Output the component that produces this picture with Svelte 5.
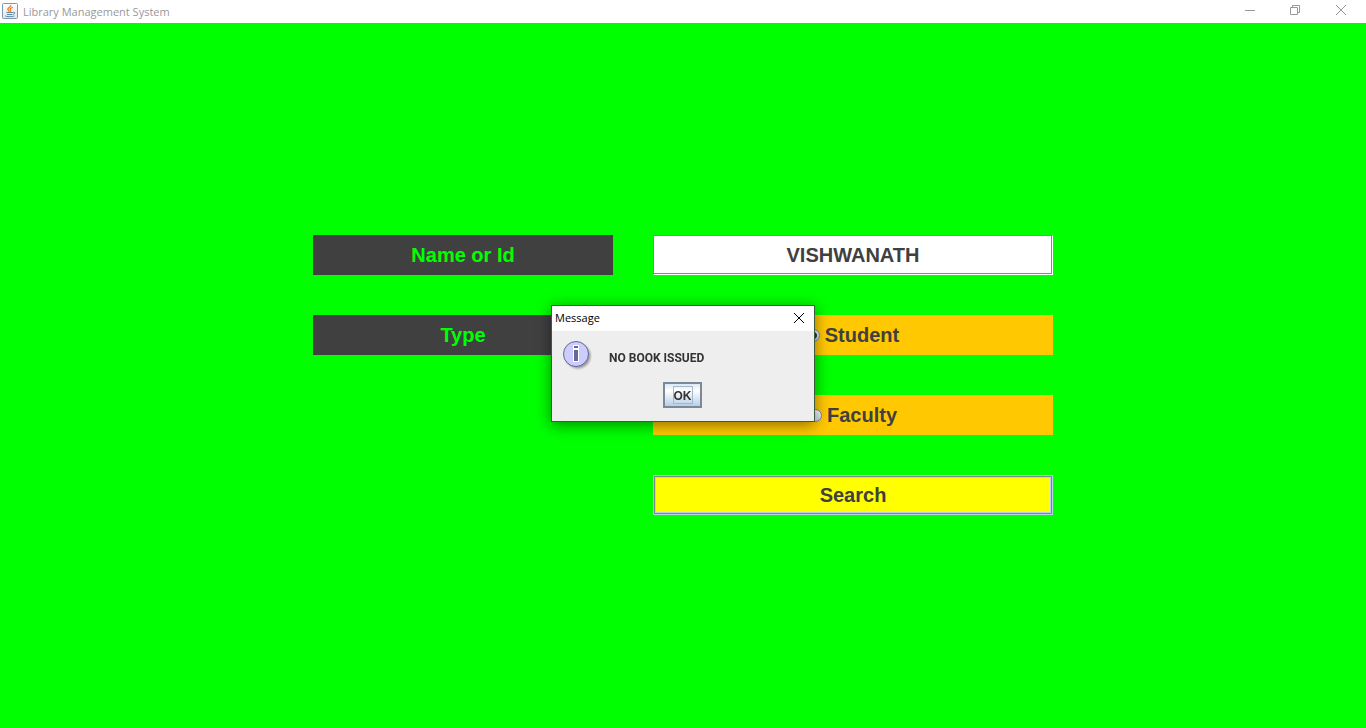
<script>
  let name = $state('VISHWANATH');
  let type = $state('Student');
  let open = $state(true);
</script>

<div class="window">
  <header class="titlebar">
    <svg class="java" width="16" height="16" viewBox="0 0 16 16" aria-hidden="true">
      <defs>
        <linearGradient id="tile" x1="0" y1="0" x2="0" y2="1">
          <stop offset="0" stop-color="#ffffff" />
          <stop offset="1" stop-color="#dfe6ec" />
        </linearGradient>
      </defs>
      <rect x="0.5" y="0.5" width="15" height="15" rx="1" fill="url(#tile)" stroke="#7c98ae" />
      <path d="M8.8 2C9.6 4 5.2 4.6 5.8 6.6C6.1 7.4 7 7.9 7.3 8.6M10.8 4.3C8.4 5 7.5 6 8.5 7.1C9 7.7 8.6 8.2 8.2 8.6" fill="none" stroke="#f07a2c" stroke-width="1.3" />
      <path d="M4.4 9.5H10.8M5 11.5H10.4M11.2 9.3C13.6 8.8 13 11 11 11.3M3.2 12.8C4 13.9 10.5 13.9 12.4 12.9" fill="none" stroke="#5d86a4" stroke-width="1" />
    </svg>
    <span class="title">Library Management System</span>
    <div class="controls">
      <button type="button" aria-label="Minimize">
        <svg width="12" height="12" viewBox="0 0 12 12"><path d="M2 6.5H12" /></svg>
      </button>
      <button type="button" aria-label="Restore">
        <svg width="12" height="12" viewBox="0 0 12 12"><path d="M1.5 3.5H8.5V10.5H1.5ZM3.5 3.5V1.5H10.5V8.5H8.5" /></svg>
      </button>
      <button type="button" aria-label="Close">
        <svg width="12" height="12" viewBox="0 0 12 12"><path d="M1 1L11 11M11 1L1 11" /></svg>
      </button>
    </div>
  </header>

  <main>
    <form onsubmit={(e) => { e.preventDefault(); open = true; }}>
      <label class="caption" for="name">Name or Id</label>
      <input class="field" id="name" type="text" bind:value={name} />
      <span class="caption" id="type-caption">Type</span>
      <div class="choices" role="radiogroup" aria-labelledby="type-caption">
        {#each ['Student', 'Faculty'] as option}
          <label class="choice">
            <input type="radio" name="type" value={option} bind:group={type} />
            {option}
          </label>
        {/each}
      </div>
      <button class="search" type="submit">Search</button>
    </form>
  </main>

  {#if open}
    <div class="overlay">
      <div class="dialog" role="dialog" aria-labelledby="dialog-title">
        <div class="dialog-bar">
          <span id="dialog-title">Message</span>
          <button type="button" class="dialog-close" aria-label="Close message" onclick={() => (open = false)}>
            <svg width="12" height="12" viewBox="0 0 12 12"><path d="M1 1L11 11M11 1L1 11" /></svg>
          </button>
        </div>
        <div class="dialog-body">
          <div class="message">
            <svg width="32" height="32" viewBox="0 0 32 32" aria-hidden="true">
              <defs>
                <filter id="soft" x="-20%" y="-20%" width="150%" height="150%">
                  <feGaussianBlur stdDeviation="1.3" />
                </filter>
              </defs>
              <circle cx="16" cy="16" r="12.5" fill="#000" opacity="0.35" filter="url(#soft)" />
              <circle cx="14" cy="14" r="12.5" fill="#ccccff" stroke="#666699" />
              <path d="M11 5H17V22H11Z" fill="#fff" />
              <path d="M12 6H16V8H12ZM12 10H16V21H12Z" fill="#666699" />
            </svg>
            <p>NO BOOK ISSUED</p>
          </div>
          <button type="button" class="ok" onclick={() => (open = false)}><span>OK</span></button>
        </div>
      </div>
    </div>
  {/if}
</div>

<style>
  :global(body) {
    margin: 0;
  }
  .window {
    display: flex;
    flex-direction: column;
    min-height: 100vh;
    background: #00ff00;
    font-family: 'Liberation Sans', Arial, sans-serif;
  }
  .window :global(*) {
    box-sizing: border-box;
  }
  button {
    margin: 0;
    padding: 0;
    font-family: inherit;
  }
  .titlebar {
    display: flex;
    align-items: center;
    height: 23px;
    padding-left: 2px;
    background: #fff;
    color: #999;
    font: 11px/23px 'Open Sans', 'Noto Sans', sans-serif;
  }
  .java {
    margin-bottom: 2px;
  }
  .title {
    margin-left: 5px;
  }
  .controls {
    display: flex;
    margin-left: auto;
    padding-right: 2px;
  }
  .controls button {
    display: grid;
    place-items: center;
    width: 46px;
    height: 20px;
    margin-bottom: 3px;
    border: 0;
    background: none;
  }
  .controls path {
    fill: none;
    stroke: #999;
  }
  main {
    display: flex;
    flex: 1;
    align-items: center;
    justify-content: center;
    padding-bottom: 1px;
  }
  form {
    display: grid;
    grid-template-columns: minmax(0, 300px) minmax(0, 400px);
    gap: 40px;
    width: 740px;
    color: #404040;
    font-size: 20px;
    font-weight: bold;
    line-height: 40px;
  }
  .caption {
    height: 40px;
    background: #404040;
    color: #00ff00;
    text-align: center;
  }
  .field {
    width: 100%;
    height: 40px;
    padding: 0;
    border: 1px solid #fff;
    border-top-color: #7a8a99;
    border-left-color: #7a8a99;
    border-radius: 0;
    outline: 0;
    background: #fff;
    box-shadow: inset -1px -1px #7a8a99;
    color: inherit;
    font: inherit;
    text-align: center;
  }
  .choices {
    display: grid;
    gap: 40px;
  }
  .choice {
    display: flex;
    align-items: center;
    justify-content: center;
    gap: 5px;
    height: 40px;
    background: #ffc800;
  }
  .choice input {
    appearance: none;
    width: 13px;
    height: 13px;
    margin: 0;
    border: 1px solid #7a8a99;
    border-radius: 50%;
    background: linear-gradient(#fff, #c4d5e4);
  }
  .choice input:checked {
    background: radial-gradient(circle, #333 3px, transparent 4px), linear-gradient(#fff, #b8cfe5);
  }
  .search {
    grid-column: 2;
    height: 40px;
    border: 1px solid #b8cfe5;
    background: #ffff00;
    box-shadow: inset 0 0 0 1px #7a8a99, inset 0 0 0 2px #b8cfe5;
    color: inherit;
    font-size: 20px;
    font-weight: bold;
  }
  .overlay {
    position: fixed;
    inset: 0;
    display: flex;
    align-items: center;
    justify-content: center;
    padding-bottom: 1px;
  }
  .dialog {
    width: 264px;
    border: 1px solid #3c5a3c;
    background: #eee;
    box-shadow: 0 3px 14px rgba(0, 0, 0, 0.45);
  }
  .dialog-bar {
    display: flex;
    align-items: center;
    justify-content: space-between;
    height: 25px;
    padding: 0 9px 1px 3px;
    background: #fff;
    color: #000;
    font: 11px/24px 'Open Sans', 'Noto Sans', sans-serif;
  }
  .dialog-close {
    display: grid;
    border: 0;
    background: none;
  }
  .dialog-close path {
    stroke: #000;
    stroke-width: 1;
  }
  .dialog-body {
    display: flex;
    flex-direction: column;
    align-items: center;
    gap: 10px;
    padding: 9px 11px 13px 10px;
  }
  .message {
    display: flex;
    align-items: center;
    align-self: stretch;
    gap: 15px;
  }
  .message p {
    margin: 0;
    padding-top: 4px;
    color: #333;
    font: bold 12px/16px Roboto, 'Liberation Sans', sans-serif;
  }
  .ok {
    display: grid;
    place-items: center;
    width: 39px;
    height: 26px;
    border: 2px solid #7a8a99;
    background: linear-gradient(#dde8f3, #fff 30%, #b8cfe5);
    color: #333;
    font-size: 12px;
    font-weight: bold;
  }
  .ok span {
    display: block;
    height: 18px;
    border: 1px solid #a3b8cc;
    line-height: 18px;
  }
</style>
